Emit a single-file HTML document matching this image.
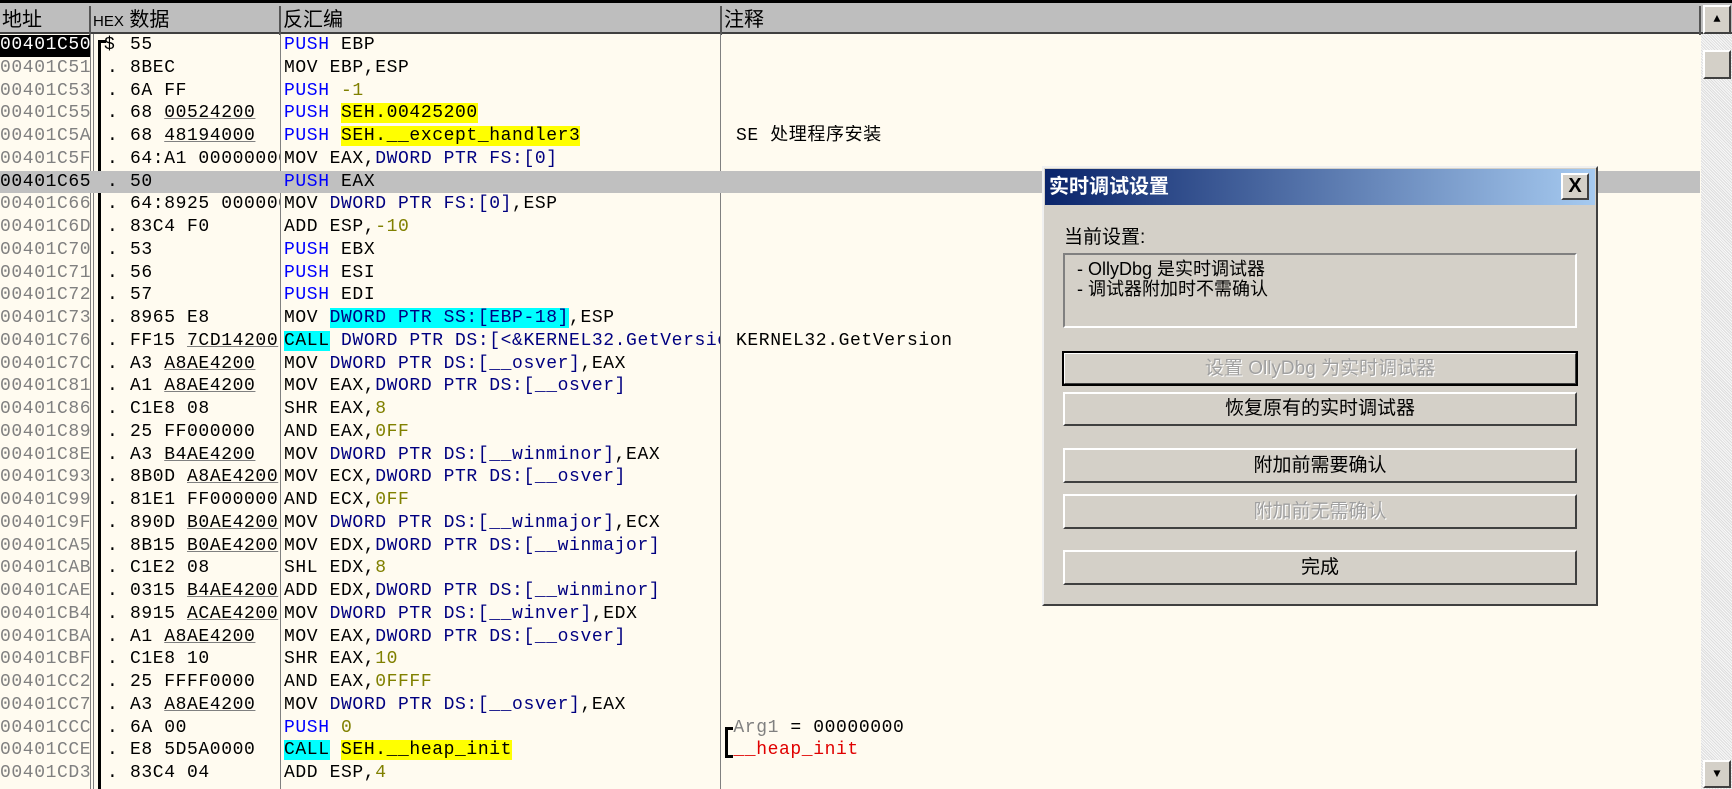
<!DOCTYPE html>
<html><head><meta charset="utf-8"><style>
*{margin:0;padding:0;box-sizing:border-box}
body{width:1732px;height:789px;background:#fffbf0;position:relative;overflow:hidden;font-family:"Liberation Mono","Noto Sans CJK SC",monospace;font-size:18px;letter-spacing:0.6px}
.hdr{position:absolute;top:0;left:0;width:1732px;height:34px;background:#bebebe;border-top:3px solid #000;border-bottom:2px solid #404040}
.hdr div{position:absolute;top:3px;height:29px;line-height:28px;border-right:2px solid #555;font-family:"Liberation Sans","Noto Sans CJK SC",sans-serif;font-size:20px;padding-left:2px;letter-spacing:0}
.vl{position:absolute;top:34px;bottom:0;width:1px;background:#808080}
.row{position:absolute;left:0;width:1700px;height:22.75px;line-height:22.75px;white-space:pre}
.c{position:absolute;top:0;height:100%;overflow:hidden}
.a{left:0;width:90px;color:#808080}
.m{left:107px;width:20px}
.h{left:130px;width:150px}
.d{left:284px;width:436px}
.k{left:736px;width:900px}
.u{text-decoration:underline;text-decoration-color:#808080}
.b{color:#0000ff}.n{color:#000080}.o{color:#808000}
.y{background:#ffff00}.cy{background:#00ffff}
.sb{position:absolute;left:1701px;top:34px;width:31px;height:755px;background:#ece9e0;background-image:repeating-linear-gradient(45deg,#ddd 0 1px,#f8f8f8 1px 2px)}
.btnw{position:absolute;background:#d4d0c8;border:2px solid;border-color:#fff #404040 #404040 #fff}
.dlg{position:absolute;left:1042px;top:166px;width:556px;height:440px;background:#d4d0c8;border:2px solid;border-color:#f0f0f0 #404040 #404040 #f0f0f0;font-family:"Liberation Sans","Noto Sans CJK SC",sans-serif;letter-spacing:0}
.btn{position:absolute;left:19px;width:514px;background:#d4d0c8;border:2px solid;border-color:#fff #404040 #404040 #fff;text-align:center;font-size:19px}
.dis{color:#a0a0a0;text-shadow:1px 1px 0 #fff}
</style></head><body>
<div class="hdr">
<div style="left:0;width:91px">地址</div>
<div style="left:91px;width:190px"><span style="font-size:15px">HEX</span> 数据</div>
<div style="left:281px;width:441px">反汇编</div>
<div style="left:722px;width:979px">注释</div>
</div>
<div class="vl" style="left:90px"></div><div class="vl" style="left:93px"></div>
<div style="position:absolute;left:98px;top:40px;width:3px;bottom:0;background:#000"></div>
<div style="position:absolute;left:98px;top:40px;width:8px;height:3px;background:#000"></div>
<div class="vl" style="left:280px"></div>
<div class="vl" style="left:720px"></div>
<div style="position:absolute;left:0;top:171px;width:1700px;height:22px;background:#c0c0c0"></div>
<div style="position:absolute;left:0;top:35px;width:90px;height:22px;background:#000"></div>

<div class="row" style="top:34px"><span class="c a" style="color:#fff">00401C50</span><span class="c m" style="left:104px">$</span><span class="c h">55</span><span class="c d"><span class="b">PUSH</span> EBP</span></div>
<div class="row" style="top:56.75px"><span class="c a">00401C51</span><span class="c m">.</span><span class="c h">8BEC</span><span class="c d">MOV EBP,ESP</span></div>
<div class="row" style="top:79.5px"><span class="c a">00401C53</span><span class="c m">.</span><span class="c h">6A FF</span><span class="c d"><span class="b">PUSH</span> <span class="o">-1</span></span></div>
<div class="row" style="top:102.25px"><span class="c a">00401C55</span><span class="c m">.</span><span class="c h">68 <span class="u">00524200</span></span><span class="c d"><span class="b">PUSH</span> <span class="y">SEH.00425200</span></span></div>
<div class="row" style="top:125px"><span class="c a">00401C5A</span><span class="c m">.</span><span class="c h">68 <span class="u">48194000</span></span><span class="c d"><span class="b">PUSH</span> <span class="y">SEH.__except_handler3</span></span><span class="c k">SE 处理程序安装</span></div>
<div class="row" style="top:147.75px"><span class="c a">00401C5F</span><span class="c m">.</span><span class="c h">64:A1 00000000</span><span class="c d">MOV EAX,<span class="n">DWORD PTR FS:[0]</span></span></div>
<div class="row" style="top:170.5px"><span class="c a" style="color:#000">00401C65</span><span class="c m">.</span><span class="c h">50</span><span class="c d"><span class="b">PUSH</span> EAX</span></div>
<div class="row" style="top:193.25px"><span class="c a">00401C66</span><span class="c m">.</span><span class="c h">64:8925 00000000</span><span class="c d">MOV <span class="n">DWORD PTR FS:[0]</span>,ESP</span></div>
<div class="row" style="top:216px"><span class="c a">00401C6D</span><span class="c m">.</span><span class="c h">83C4 F0</span><span class="c d">ADD ESP,<span class="o">-10</span></span></div>
<div class="row" style="top:238.75px"><span class="c a">00401C70</span><span class="c m">.</span><span class="c h">53</span><span class="c d"><span class="b">PUSH</span> EBX</span></div>
<div class="row" style="top:261.5px"><span class="c a">00401C71</span><span class="c m">.</span><span class="c h">56</span><span class="c d"><span class="b">PUSH</span> ESI</span></div>
<div class="row" style="top:284.25px"><span class="c a">00401C72</span><span class="c m">.</span><span class="c h">57</span><span class="c d"><span class="b">PUSH</span> EDI</span></div>
<div class="row" style="top:307px"><span class="c a">00401C73</span><span class="c m">.</span><span class="c h">8965 E8</span><span class="c d">MOV <span class="n cy">DWORD PTR SS:[EBP-18]</span>,ESP</span></div>
<div class="row" style="top:329.75px"><span class="c a">00401C76</span><span class="c m">.</span><span class="c h">FF15 <span class="u">7CD14200</span></span><span class="c d"><span class="cy">CALL</span> <span class="n">DWORD PTR DS:[&lt;&amp;KERNEL32.GetVersion&gt;]</span></span><span class="c k">KERNEL32.GetVersion</span></div>
<div class="row" style="top:352.5px"><span class="c a">00401C7C</span><span class="c m">.</span><span class="c h">A3 <span class="u">A8AE4200</span></span><span class="c d">MOV <span class="n">DWORD PTR DS:[__osver]</span>,EAX</span></div>
<div class="row" style="top:375.25px"><span class="c a">00401C81</span><span class="c m">.</span><span class="c h">A1 <span class="u">A8AE4200</span></span><span class="c d">MOV EAX,<span class="n">DWORD PTR DS:[__osver]</span></span></div>
<div class="row" style="top:398px"><span class="c a">00401C86</span><span class="c m">.</span><span class="c h">C1E8 08</span><span class="c d">SHR EAX,<span class="o">8</span></span></div>
<div class="row" style="top:420.75px"><span class="c a">00401C89</span><span class="c m">.</span><span class="c h">25 FF000000</span><span class="c d">AND EAX,<span class="o">0FF</span></span></div>
<div class="row" style="top:443.5px"><span class="c a">00401C8E</span><span class="c m">.</span><span class="c h">A3 <span class="u">B4AE4200</span></span><span class="c d">MOV <span class="n">DWORD PTR DS:[__winminor]</span>,EAX</span></div>
<div class="row" style="top:466.25px"><span class="c a">00401C93</span><span class="c m">.</span><span class="c h">8B0D <span class="u">A8AE4200</span></span><span class="c d">MOV ECX,<span class="n">DWORD PTR DS:[__osver]</span></span></div>
<div class="row" style="top:489px"><span class="c a">00401C99</span><span class="c m">.</span><span class="c h">81E1 FF000000</span><span class="c d">AND ECX,<span class="o">0FF</span></span></div>
<div class="row" style="top:511.75px"><span class="c a">00401C9F</span><span class="c m">.</span><span class="c h">890D <span class="u">B0AE4200</span></span><span class="c d">MOV <span class="n">DWORD PTR DS:[__winmajor]</span>,ECX</span></div>
<div class="row" style="top:534.5px"><span class="c a">00401CA5</span><span class="c m">.</span><span class="c h">8B15 <span class="u">B0AE4200</span></span><span class="c d">MOV EDX,<span class="n">DWORD PTR DS:[__winmajor]</span></span></div>
<div class="row" style="top:557.25px"><span class="c a">00401CAB</span><span class="c m">.</span><span class="c h">C1E2 08</span><span class="c d">SHL EDX,<span class="o">8</span></span></div>
<div class="row" style="top:580px"><span class="c a">00401CAE</span><span class="c m">.</span><span class="c h">0315 <span class="u">B4AE4200</span></span><span class="c d">ADD EDX,<span class="n">DWORD PTR DS:[__winminor]</span></span></div>
<div class="row" style="top:602.75px"><span class="c a">00401CB4</span><span class="c m">.</span><span class="c h">8915 <span class="u">ACAE4200</span></span><span class="c d">MOV <span class="n">DWORD PTR DS:[__winver]</span>,EDX</span></div>
<div class="row" style="top:625.5px"><span class="c a">00401CBA</span><span class="c m">.</span><span class="c h">A1 <span class="u">A8AE4200</span></span><span class="c d">MOV EAX,<span class="n">DWORD PTR DS:[__osver]</span></span></div>
<div class="row" style="top:648.25px"><span class="c a">00401CBF</span><span class="c m">.</span><span class="c h">C1E8 10</span><span class="c d">SHR EAX,<span class="o">10</span></span></div>
<div class="row" style="top:671px"><span class="c a">00401CC2</span><span class="c m">.</span><span class="c h">25 FFFF0000</span><span class="c d">AND EAX,<span class="o">0FFFF</span></span></div>
<div class="row" style="top:693.75px"><span class="c a">00401CC7</span><span class="c m">.</span><span class="c h">A3 <span class="u">A8AE4200</span></span><span class="c d">MOV <span class="n">DWORD PTR DS:[__osver]</span>,EAX</span></div>
<div class="row" style="top:716.5px"><span class="c a">00401CCC</span><span class="c m">.</span><span class="c h">6A 00</span><span class="c d"><span class="b">PUSH</span> <span class="o">0</span></span><span class="c k" style="left:722px"> <span style="color:#808080">Arg1</span> = 00000000</span></div>
<div class="row" style="top:739.25px"><span class="c a">00401CCE</span><span class="c m">.</span><span class="c h">E8 5D5A0000</span><span class="c d"><span class="cy">CALL</span> <span class="y">SEH.__heap_init</span></span><span class="c k" style="left:722px;color:#e00000"> __heap_init</span></div>
<div class="row" style="top:762px"><span class="c a">00401CD3</span><span class="c m">.</span><span class="c h">83C4 04</span><span class="c d">ADD ESP,<span class="o">4</span></span></div>
<div style="position:absolute;left:725px;top:727px;width:3px;height:30px;background:#000"></div>
<div style="position:absolute;left:725px;top:727px;width:8px;height:3px;background:#000"></div>
<div style="position:absolute;left:725px;top:755px;width:8px;height:3px;background:#000"></div>

<div class="sb"></div>
<div class="btnw" style="left:1703px;top:5px;width:28px;height:29px;font-size:12px;text-align:center;line-height:24px;letter-spacing:0">▲</div>
<div class="btnw" style="left:1703px;top:50px;width:28px;height:29px"></div>
<div class="btnw" style="left:1703px;top:760px;width:28px;height:28px;font-size:12px;text-align:center;line-height:24px;letter-spacing:0">▼</div>

<div class="dlg">
<div style="position:absolute;left:1px;top:1px;width:550px;height:36px;background:linear-gradient(90deg,#0a246a,#a6caf0);color:#fff;font-weight:bold;font-size:20px;line-height:36px;padding-left:4px">实时调试设置</div>
<div class="btnw" style="left:517px;top:5px;width:28px;height:27px;font-size:20px;line-height:22px;text-align:center;font-weight:bold">X</div>
<div style="position:absolute;left:20px;top:54px;font-size:19px">当前设置:</div>
<div style="position:absolute;left:19px;top:85px;width:514px;height:75px;border:2px solid;border-color:#808080 #fff #fff #808080;font-size:18px;line-height:20px;padding:4px 0 0 12px">- OllyDbg 是实时调试器<br>- 调试器附加时不需确认</div>
<div class="btn dis" style="top:184px;height:33px;line-height:29px;outline:2px solid #000;outline-offset:-1px">设置 OllyDbg 为实时调试器</div>
<div class="btn" style="top:224px;height:34px;line-height:30px">恢复原有的实时调试器</div>
<div class="btn" style="top:280px;height:35px;line-height:31px">附加前需要确认</div>
<div class="btn dis" style="top:326px;height:35px;line-height:31px">附加前无需确认</div>
<div class="btn" style="top:382px;height:35px;line-height:31px">完成</div>
</div>
</body></html>
